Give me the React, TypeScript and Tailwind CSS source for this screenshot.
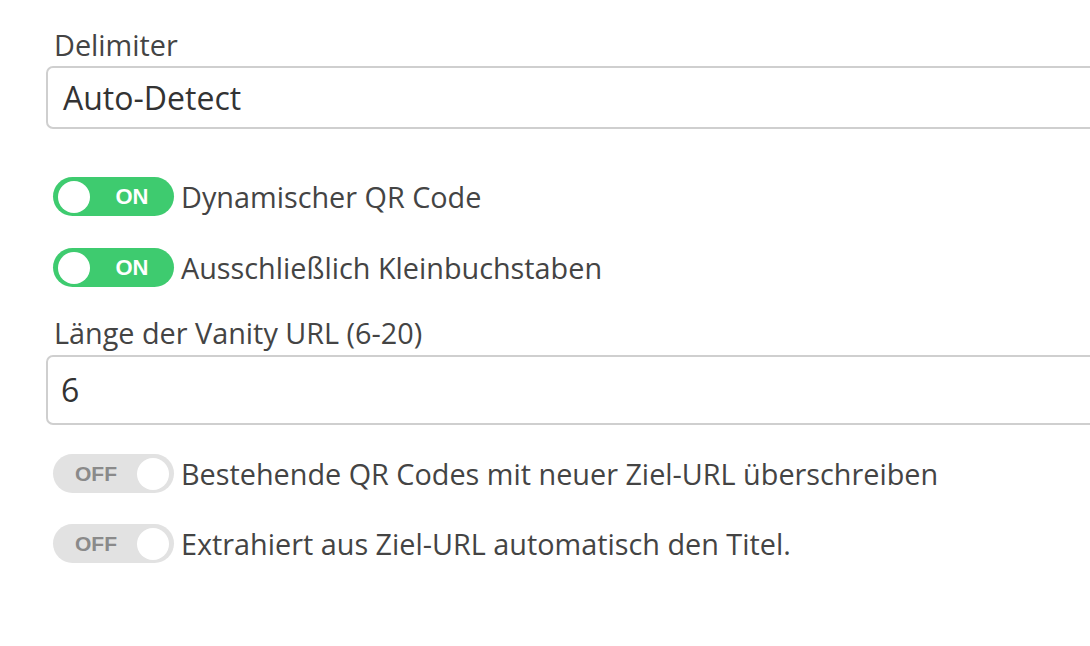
import React from "react";

const boldFace = { fontFamily: "'Liberation Sans', Arial, sans-serif" };

function Toggle({ on, label }: { on: boolean; label: string }) {
  return (
    <div className="flex items-center h-[39px] ml-[7px]">
      {on ? (
        <div className="relative w-[121px] h-[39px] rounded-full bg-[#3ecb6f] flex items-center">
          <span className="absolute left-[5px] top-[3.5px] w-[32px] h-[32px] rounded-full bg-white" />
          <span className="absolute left-[62px] w-[34px] text-center text-white font-bold text-[22px] leading-none" style={boldFace}>
            ON
          </span>
        </div>
      ) : (
        <div className="relative w-[121px] h-[39px] rounded-full bg-[#e2e2e2] flex items-center">
          <span className="absolute left-[20px] w-[46px] text-center text-[#8a8a8a] font-bold text-[21px] leading-none" style={boldFace}>
            OFF
          </span>
          <span className="absolute right-[5px] top-[3.5px] w-[32px] h-[32px] rounded-full bg-white" />
        </div>
      )}
      <span className="ml-[7px] text-[28.8px] leading-[36px] text-[#444]">{label}</span>
    </div>
  );
}

export default function App() {
  return (
    <div
      className="w-[1090px] h-[646px] bg-white overflow-hidden pl-[46px] pt-[27px]"
      style={{ fontFamily: "'Open Sans', 'Noto Sans', sans-serif" }}
    >
      <div className="w-[1100px]">
        <label className="block ml-[8px] text-[28.8px] leading-[36px] text-[#444]">Delimiter</label>
        <div className="mt-[3px] h-[63px] border-2 border-[#cfcfcf] rounded-[7px] flex items-center px-[15px] text-[32px] text-[#333]">
          Auto-Detect
        </div>

        <div className="mt-[48px]">
          <Toggle on label="Dynamischer QR Code" />
        </div>
        <div className="mt-[32px]">
          <Toggle on label="Ausschließlich Kleinbuchstaben" />
        </div>

        <label className="block mt-[28px] ml-[8px] text-[28.8px] leading-[36px] text-[#444]">
          Länge der Vanity URL (6-20)
        </label>
        <div className="mt-[4px] h-[70px] border-2 border-[#cfcfcf] rounded-[7px] flex items-center px-[13px] text-[32px] text-[#333]">
          6
        </div>

        <div className="mt-[29px]">
          <Toggle on={false} label="Bestehende QR Codes mit neuer Ziel-URL überschreiben" />
        </div>
        <div className="mt-[31px]">
          <Toggle on={false} label="Extrahiert aus Ziel-URL automatisch den Titel." />
        </div>
      </div>
    </div>
  );
}
